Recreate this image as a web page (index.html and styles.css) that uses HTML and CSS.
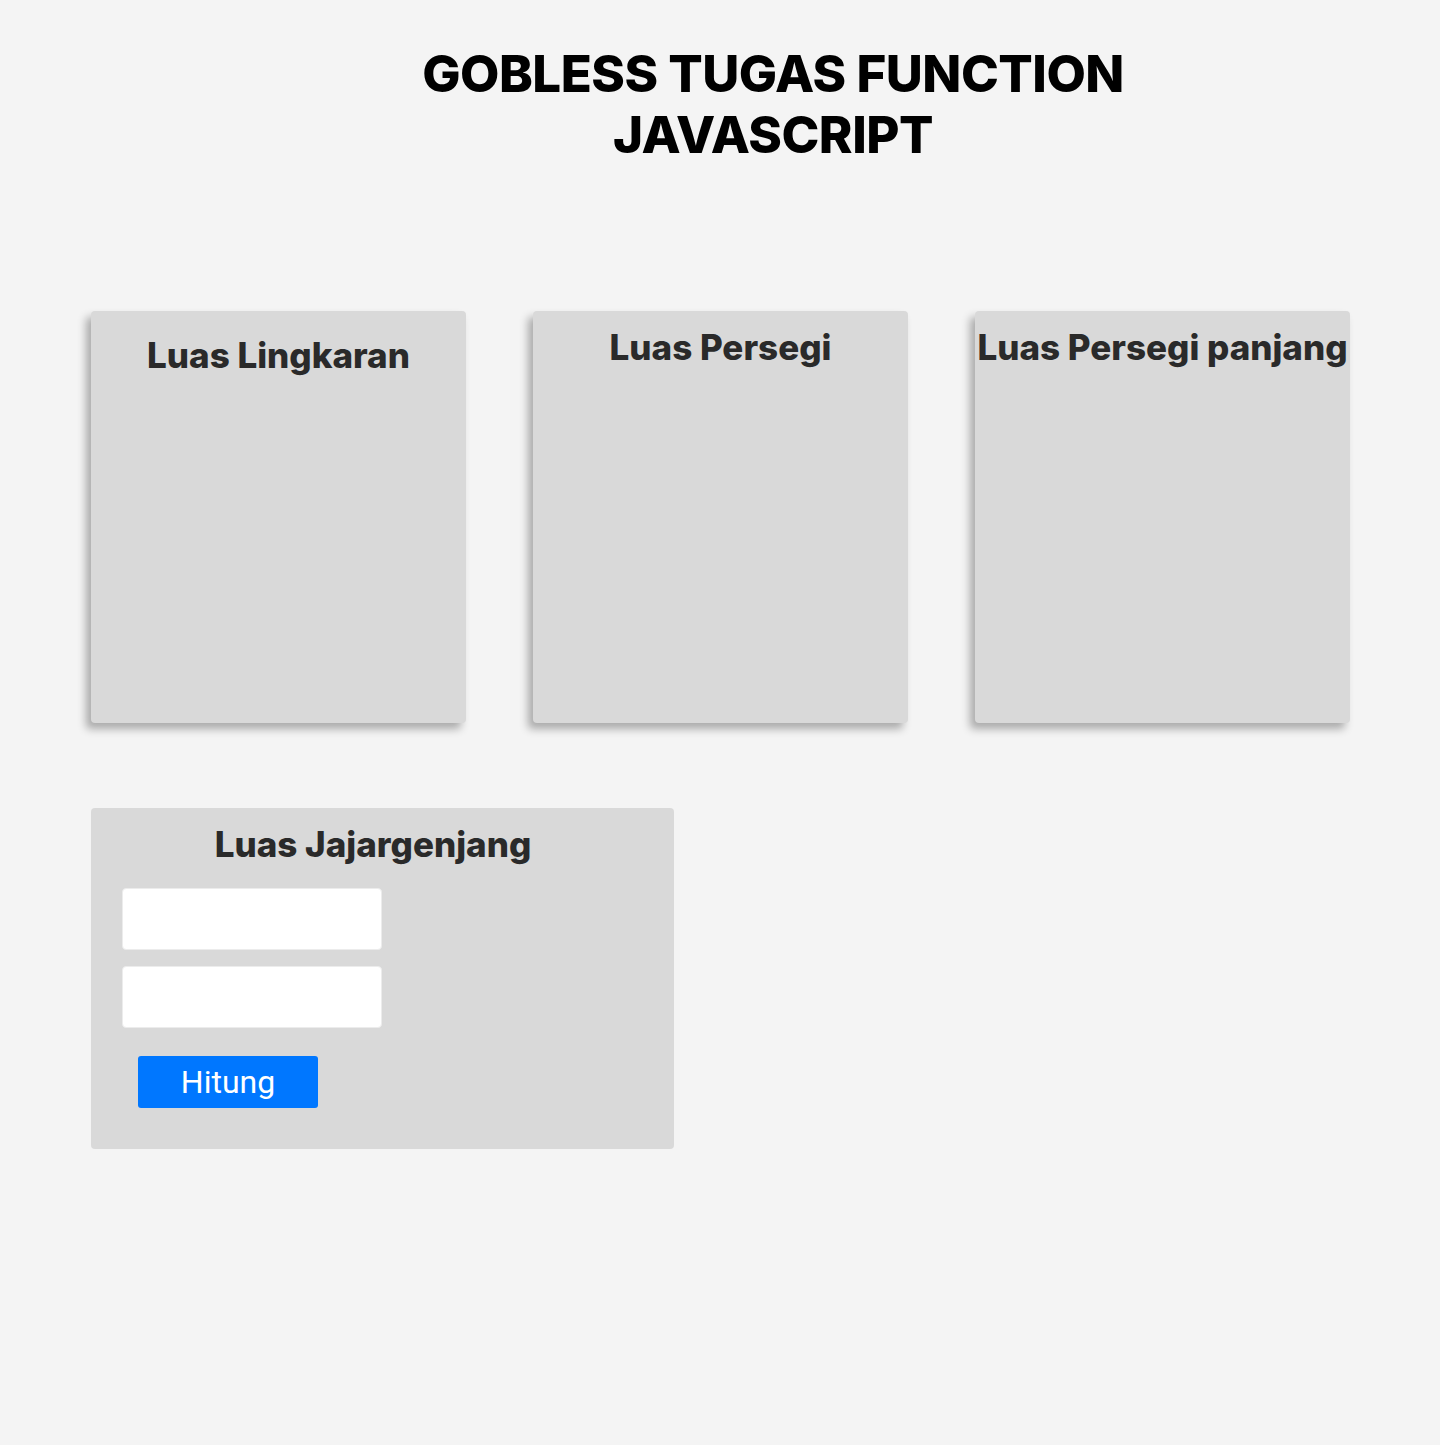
FILE: index.html
```html
<!DOCTYPE html>
<html lang="id">
<head>
<meta charset="utf-8">
<title>Gobless Tugas Function JavaScript</title>
<link rel="stylesheet" href="styles.css">
</head>
<body>
<header class="page-header">
  <h1 class="page-title">GOBLESS TUGAS FUNCTION JAVASCRIPT</h1>
</header>
<main class="content">
  <section class="card-row">
    <div class="card card-shadow card-first">
      <h2 class="card-title">Luas Lingkaran</h2>
    </div>
    <div class="card card-shadow">
      <h2 class="card-title">Luas Persegi</h2>
    </div>
    <div class="card card-shadow">
      <h2 class="card-title">Luas Persegi panjang</h2>
    </div>
  </section>
  <section class="card form-card">
    <h2 class="card-title form-title">Luas Jajargenjang</h2>
    <div class="form-fields">
      <input class="field" type="text">
      <input class="field" type="text">
    </div>
    <button class="btn" type="button">Hitung</button>
  </section>
</main>
</body>
</html>
```

FILE: styles.css
```css
* { box-sizing: border-box; }

body {
  margin: 0;
  background: #f4f4f4;
  font-family: Inter, "Liberation Sans", sans-serif;
  color: #000;
  min-height: 1445px;
}

.page-header {
  padding: 43px 0 0 106px;
  display: flex;
  justify-content: center;
}

.page-title {
  margin: 0;
  max-width: 760px;
  text-align: center;
  font-size: 51px;
  line-height: 61px;
  font-weight: 800;
  letter-spacing: -0.5px;
  color: #000;
}

.content {
  padding: 146px 0 0 91px;
}

.card-row {
  display: grid;
  grid-template-columns: repeat(3, 375px);
  column-gap: 67px;
}

.card {
  background: #d9d9d9;
  border-radius: 4px;
}

.card-shadow {
  height: 412px;
  box-shadow: -5px 6px 9px rgba(0, 0, 0, 0.3);
  padding-top: 15px;
}

.card-first {
  padding-top: 23px;
}

.card-title {
  margin: 0;
  text-align: center;
  font-size: 35px;
  line-height: 42px;
  font-weight: 800;
  color: #2a2a2a;
  white-space: nowrap;
}

.form-card {
  margin-top: 85px;
  width: 583px;
  height: 341px;
  padding: 15px 0 0 31px;
}

.form-title {
  font-size: 35px;
  text-align: center;
  width: 502px;
}

.form-fields {
  display: flex;
  flex-direction: column;
  gap: 16px;
  margin-top: 23px;
  width: 260px;
}

.field {
  display: block;
  width: 260px;
  height: 62px;
  border: 1px solid #ececec;
  border-radius: 4px;
  background: #fff;
  margin: 0;
}

.btn {
  display: block;
  margin: 28px 0 0 16px;
  width: 180px;
  height: 52px;
  border: none;
  border-radius: 3px;
  background: #0077ff;
  color: #fff;
  font-family: Roboto, "Noto Sans", sans-serif;
  font-size: 32px;
  font-weight: 400;
  padding: 0;
}
```
